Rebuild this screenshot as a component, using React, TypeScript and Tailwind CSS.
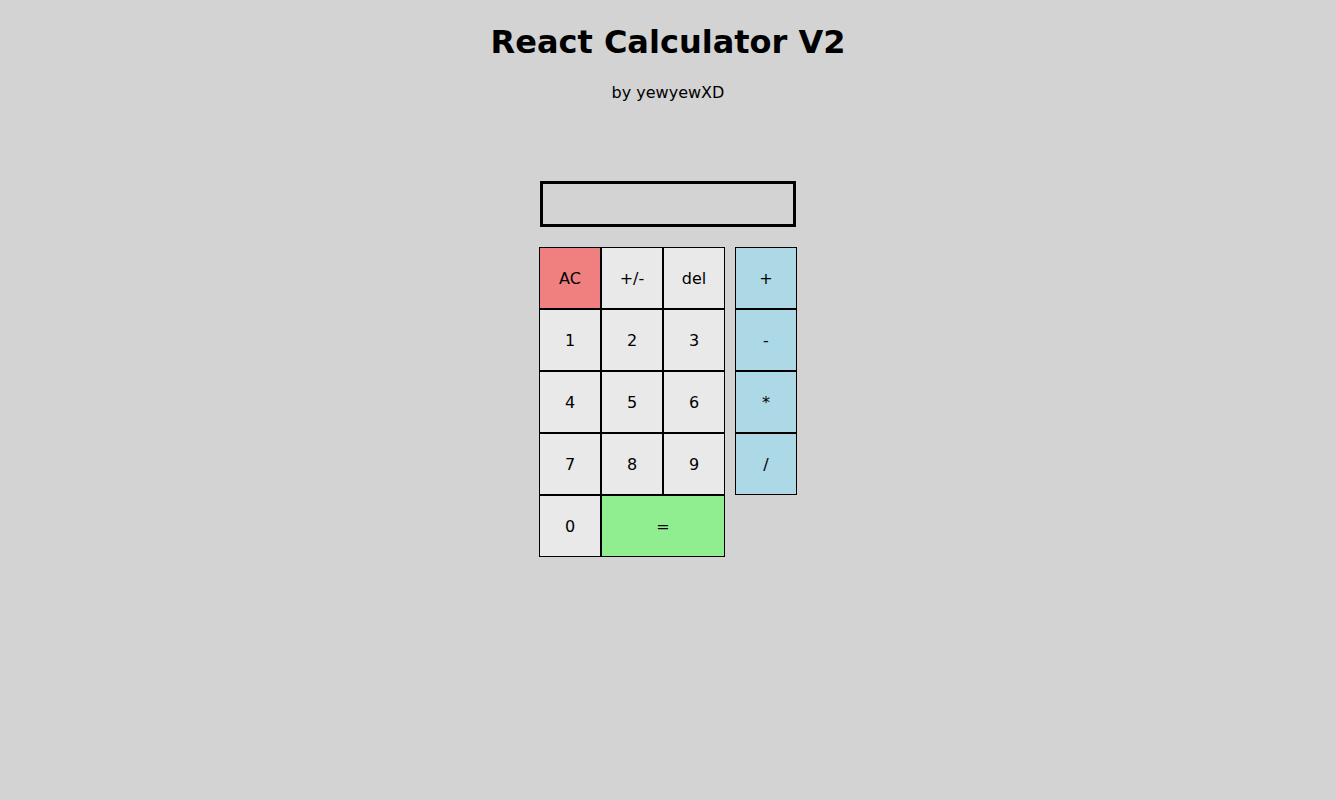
import React, { useState } from 'react';

const numBtn = 'w-[62px] h-[62px] border border-black bg-[#e9e9e9] text-black text-base pt-[2px]';

const App: React.FC = () => {
  const [value, setValue] = useState('');

  const press = (k: string) => {
    if (k === 'AC') return setValue('');
    if (k === 'del') return setValue(value.slice(0, -1));
    if (k === '+/-') return setValue(value.startsWith('-') ? value.slice(1) : value ? '-' + value : value);
    if (k === '=') {
      try {
        // eslint-disable-next-line no-new-func
        setValue(String(Function(`return (${value})`)()));
      } catch {
        setValue('Error');
      }
      return;
    }
    setValue(value + k);
  };

  return (
    <div className="min-h-[800px] bg-[#d3d3d3] text-black text-center font-['DejaVu_Sans',Verdana,sans-serif]">
      <h1 className="pt-[24px] text-[32px] leading-[37px] font-bold">React Calculator V2</h1>
      <p className="mt-[22px] text-base leading-[19px]">by yewyewXD</p>

      <div className="flex flex-col items-center mt-[79px]">
        <input
          readOnly
          value={value}
          className="w-[256px] h-[46px] border-[3px] border-black bg-transparent px-2 text-right text-lg outline-none"
        />

        <div className="flex gap-[10px] mt-[20px]">
          <div className="grid grid-cols-[62px_62px_62px]">
            <button onClick={() => press('AC')} className={`${numBtn} bg-[#f08080]`}>AC</button>
            <button onClick={() => press('+/-')} className={numBtn}>+/-</button>
            <button onClick={() => press('del')} className={numBtn}>del</button>
            {['1', '2', '3', '4', '5', '6', '7', '8', '9', '0'].map((n) => (
              <button key={n} onClick={() => press(n)} className={numBtn}>
                {n}
              </button>
            ))}
            <button
              onClick={() => press('=')}
              className="col-span-2 h-[62px] border border-black bg-[#90ee90] text-base pt-[2px]"
            >
              =
            </button>
          </div>
          <div className="flex flex-col self-start">
            {['+', '-', '*', '/'].map((op) => (
              <button
                key={op}
                onClick={() => press(op)}
                className="w-[62px] h-[62px] border border-black bg-[#add8e6] text-base pt-[2px]"
              >
                {op}
              </button>
            ))}
          </div>
        </div>
      </div>
    </div>
  );
};

export default App;
